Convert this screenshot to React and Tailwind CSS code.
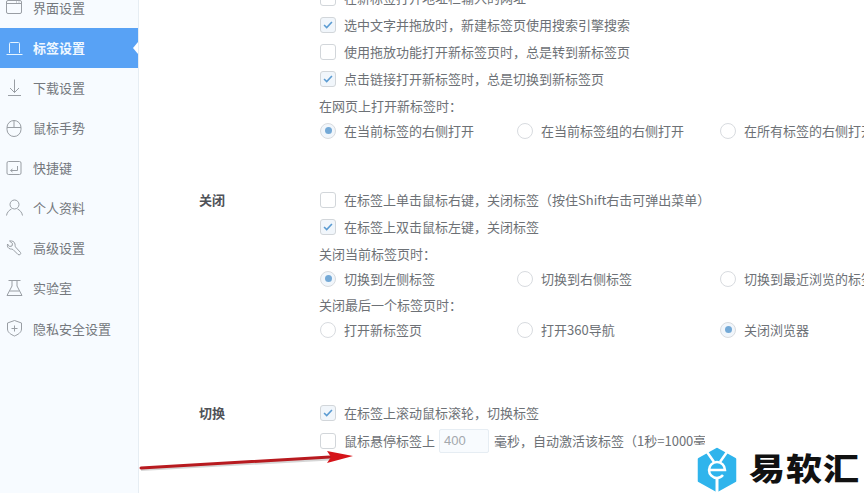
const font = { fontFamily: '"Noto Sans CJK SC", "Liberation Sans", sans-serif' };

const iconCls = "w-[20px] h-[20px] shrink-0";
const S = ({ children }) => (
  <svg viewBox="0 0 20 20" className={iconCls} fill="none" stroke="#999ea4" strokeWidth="1">{children}</svg>
);
const icons = [
  <S><rect x="2.500" y="2.500" width="15" height="13" rx="1.500" /><path d="M2.500 5.500h15M12 4h1M14.500 4h1" /></S>,
  <svg viewBox="0 0 20 20" className={iconCls} fill="none" stroke="#e6f4ff" strokeWidth="1"><path d="M5.500 15V5.500a1 1 0 0 1 1-1h8a1 1 0 0 1 1 1V15M2.500 16.500h16" /></svg>,
  <S><path d="M10.500 1.500v13M6 10l4.500 4.500L15 10M4 17.500h13" /></S>,
  <S><rect x="3" y="2.500" width="14" height="16" rx="7" /><path d="M3 9.500h14M10 2.500v7" /></S>,
  <S><rect x="3" y="3.500" width="14" height="13" rx="1.500" /><path d="M13.500 8v4.500H7M8.500 11l-2 1.500 2 1.500" /></S>,
  <S><circle cx="10.500" cy="6.500" r="4.500" /><path d="M2.500 17.500c.5-3.500 3-5.500 5-6.500M18.500 17.500c-.5-3.500-3-5.500-5-6.500" /></S>,
  <S><path d="M5.500 3l3 2.500-.5 2.500-2.500.5-2-2.500c-.5 2.500.5 4.500 3 5 1 .2 1.500 0 2.500.5l5 5c1.500 1 3.500-.5 2.500-2l-5-5.500c-.5-1-.3-1.500-.5-3-.5-2.500-3-3.500-5.500-3z" /></S>,
  <S><path d="M4.500 2.500h12M8 2.500v5.500L3 17.500h15l-5-9.500V2.500M5.500 13h10" /></S>,
  <S><path d="M10.500 2.500l7 2.500v6c0 3.500-3.500 5.500-7 7-3.500-1.500-7-3.500-7-7V5z" /><path d="M10.500 7.500v6M7.500 10.500h6" /></S>,
];
const nav = ["界面设置", "标签设置", "下载设置", "鼠标手势", "快捷键", "个人资料", "高级设置", "实验室", "隐私安全设置"];

function Check({ on }) {
  return (
    <span className={"w-[16px] h-[16px] shrink-0 rounded-[3px] border border-[#d2d6da] flex items-center justify-center " + (on ? "bg-[#f1f6fb]" : "bg-white")}>
      {on && (
        <svg viewBox="0 0 16 16" className="w-[14px] h-[14px]" fill="none" stroke="#5b9bd2" strokeWidth="1.800">
          <path d="M3.500 8l3 3 6-6.500" />
        </svg>
      )}
    </span>
  );
}
function CheckRow({ on, children, h = "h-[27px]" }) {
  return (
    <div className={`flex items-center gap-[8px] ${h}`}>
      <Check on={on} />
      <span className="whitespace-nowrap">{children}</span>
    </div>
  );
}
function Radio({ on, children, w }) {
  return (
    <div className={`flex items-center gap-[8px] shrink-0 ${w}`}>
      <span className={"w-[16px] h-[16px] shrink-0 rounded-full border border-[#d8dbdf] flex items-center justify-center " + (on ? "bg-[#f1f6fb]" : "bg-white")}>
        {on && <span className="w-[7px] h-[7px] rounded-full bg-[#74a9d6]" />}
      </span>
      <span className="whitespace-nowrap">{children}</span>
    </div>
  );
}
function Radios({ items, on }) {
  const widths = ["w-[197px]", "w-[203px]", "w-[200px]"];
  return (
    <div className="flex items-center h-[25px]">
      {items.map((t, i) => (
        <Radio key={t} on={i === on} w={widths[i]}>{t}</Radio>
      ))}
    </div>
  );
}
const Label = ({ children }) => <div className="h-[26px] pt-[2px] flex items-center -ml-[1px] whitespace-nowrap">{children}</div>;

function Section({ title, children, className }) {
  return (
    <section className={`flex ${className}`}>
      <h3 className="w-[121px] shrink-0 font-bold text-[13px] text-[#4f5257] leading-[27px]">{title}</h3>
      <div className="min-w-0">{children}</div>
    </section>
  );
}

export default function App() {
  return (
    <div style={font} className="relative w-[864px] h-[493px] overflow-hidden bg-white text-[13px] text-[#6d7176] flex">
      <aside className="w-[139px] shrink-0 bg-[#f7fbff] border-r border-[#e6edf3] h-full overflow-hidden">
        <nav className="-mt-[12.500px]">
          {nav.map((t, i) => (
            <div
              key={t}
              className={
                "relative h-[40.100px] pl-[4px] flex items-center gap-[9px] text-[13px] " +
                (i === 1 ? "bg-[#58a2f5] text-[#f0f8ff] font-bold w-[138px]" : "text-[#74787d]")
              }
            >
              {icons[i]}
              <span className="whitespace-nowrap">{t}</span>
              {i === 1 && (
                <span className="absolute right-0 top-[14px] w-0 h-0 border-y-[6px] border-y-transparent border-r-[5px] border-r-white" />
              )}
            </div>
          ))}
        </nav>
      </aside>

      <main className="flex-1 min-w-0 pl-[60px] -mt-[16px]">
        <Section title="" className="">
          <CheckRow on={false}>在新标签打开地址栏输入的网址</CheckRow>
          <CheckRow on>选中文字并拖放时，新建标签页使用搜索引擎搜索</CheckRow>
          <CheckRow on={false}>使用拖放功能打开新标签页时，总是转到新标签页</CheckRow>
          <CheckRow on>点击链接打开新标签时，总是切换到新标签页</CheckRow>
          <Label>在网页上打开新标签时：</Label>
          <Radios items={["在当前标签的右侧打开", "在当前标签组的右侧打开", "在所有标签的右侧打开"]} on={0} />
        </Section>
        <Section title="关闭" className="mt-[43px]">
          <CheckRow on={false}>在标签上单击鼠标右键，关闭标签（按住Shift右击可弹出菜单）</CheckRow>
          <CheckRow on>在标签上双击鼠标左键，关闭标签</CheckRow>
          <Label>关闭当前标签页时：</Label>
          <Radios items={["切换到左侧标签", "切换到右侧标签", "切换到最近浏览的标签"]} on={0} />
          <Label>关闭最后一个标签页时：</Label>
          <Radios items={["打开新标签页", "打开360导航", "关闭浏览器"]} on={2} />
        </Section>
        <Section title="切换" className="mt-[57px]">
          <CheckRow on h="h-[28px]">在标签上滚动鼠标滚轮，切换标签</CheckRow>
          <div className="flex items-center gap-[8px] h-[28px] whitespace-nowrap">
            <Check on={false} />
            <span>鼠标悬停标签上</span>
            <span className="-ml-[4px] w-[50px] h-[24px] border border-[#e6edf3] bg-[#f8fbfe] rounded-[2px] text-[#a3a8ad] pl-[4px] leading-[22px] font-['Liberation_Sans']">400</span>
            <span className="-ml-[3px]">毫秒，自动激活该标签（1秒=1000毫秒）</span>
          </div>
        </Section>
      </main>

      <svg className="absolute left-[138px] top-[446px] w-[222px] h-[26px]" viewBox="0 0 222 26" fill="none">
        <path d="M3 23.500 L192 13" stroke="#8a8a8a" strokeWidth="3" opacity="0.35" />
        <path d="M3 22 L192 11" stroke="#b81a1f" strokeWidth="3" strokeLinecap="round" />
        <path d="M189 5 L215 10 L189 17 L193 11z" fill="#d5141a" />
      </svg>

      <div className="absolute left-[705px] top-[428px] w-[159px] h-[20px] bg-white" />
      <div className="absolute left-[694px] top-[445px] w-[170px] h-[48px] bg-white flex items-start">
        <svg viewBox="0 0 46 48" className="w-[46px] h-[48px] shrink-0">
          <path d="M23 4 L41 14 V36 L23 46 L5 36 V14z" fill="#2fb4ec" stroke="#2fb4ec" strokeLinejoin="round" strokeWidth="2.500" />
          <path d="M13 7 L20 17 M33 7 L26 17" stroke="#fff" strokeWidth="2.500" fill="none" />
          <path d="M15 25a8 8 0 0 1 8-8a8 8 0 0 1 8 8v0H16M15 25a8 8 0 0 0 8 8a8 8 0 0 0 6-3" stroke="#fff" strokeWidth="2.500" fill="none" />
          <path d="M23 33v15" stroke="#fff" strokeWidth="3" fill="none" />
        </svg>
        <span className="ml-[9px] -mt-[2px] text-[36px] leading-[46px] font-black text-[#111] whitespace-nowrap tracking-[1px] scale-y-[0.85]">易软汇</span>
      </div>
    </div>
  );
}
